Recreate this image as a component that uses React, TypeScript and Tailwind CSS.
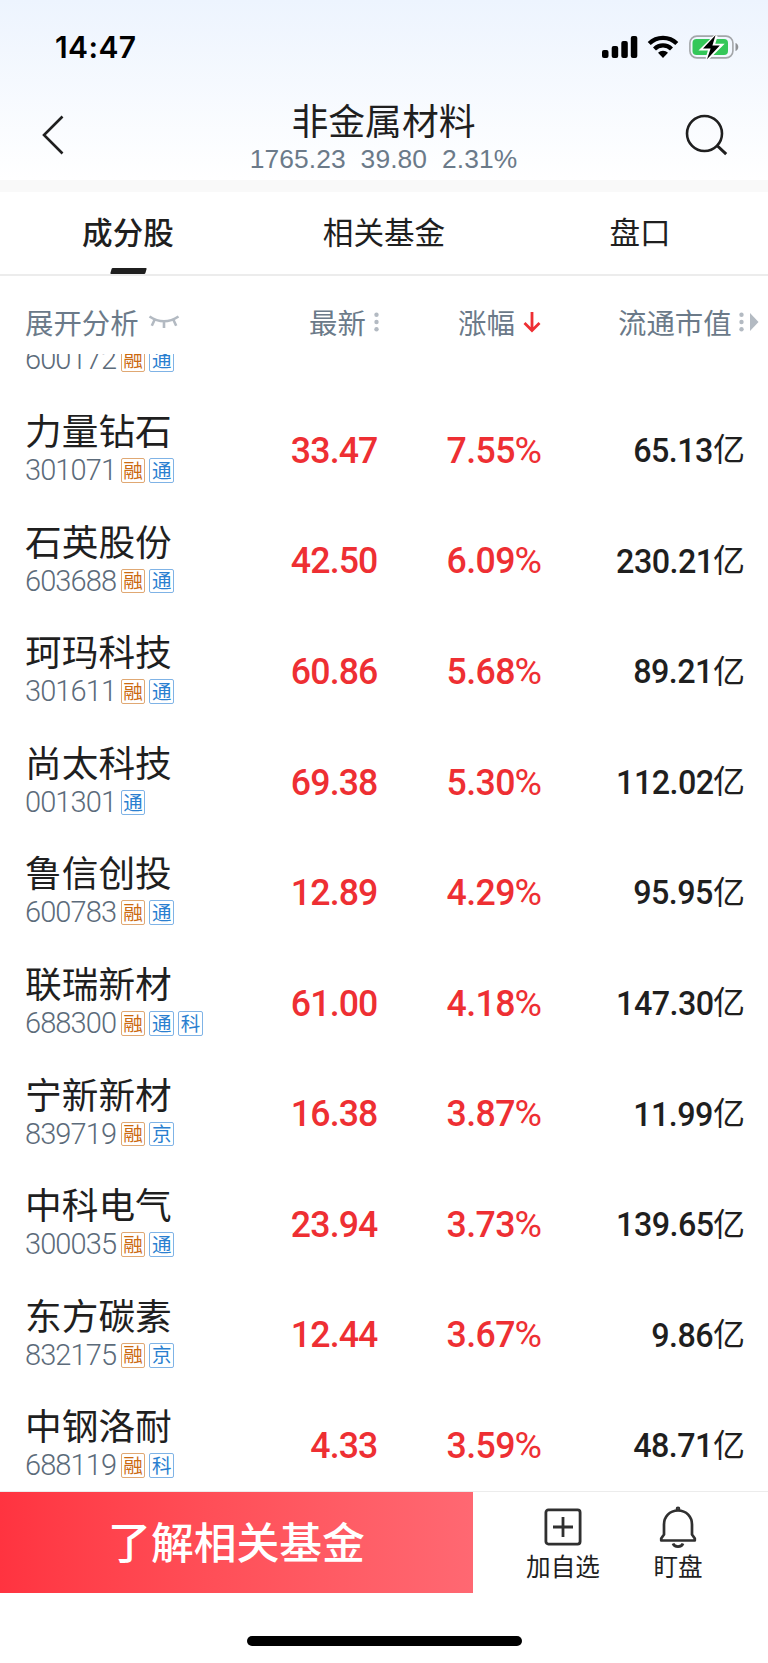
import clsx from "clsx";

type Tag = "融" | "通" | "科" | "京";

interface Stock {
  name: string;
  code: string;
  tags: Tag[];
  price: string;
  change: string;
  cap: string;
}

const STOCKS: Stock[] = [
  { name: "力量钻石", code: "301071", tags: ["融", "通"], price: "33.47", change: "7.55", cap: "65.13" },
  { name: "石英股份", code: "603688", tags: ["融", "通"], price: "42.50", change: "6.09", cap: "230.21" },
  { name: "珂玛科技", code: "301611", tags: ["融", "通"], price: "60.86", change: "5.68", cap: "89.21" },
  { name: "尚太科技", code: "001301", tags: ["通"], price: "69.38", change: "5.30", cap: "112.02" },
  { name: "鲁信创投", code: "600783", tags: ["融", "通"], price: "12.89", change: "4.29", cap: "95.95" },
  { name: "联瑞新材", code: "688300", tags: ["融", "通", "科"], price: "61.00", change: "4.18", cap: "147.30" },
  { name: "宁新新材", code: "839719", tags: ["融", "京"], price: "16.38", change: "3.87", cap: "11.99" },
  { name: "中科电气", code: "300035", tags: ["融", "通"], price: "23.94", change: "3.73", cap: "139.65" },
  { name: "东方碳素", code: "832175", tags: ["融", "京"], price: "12.44", change: "3.67", cap: "9.86" },
  { name: "中钢洛耐", code: "688119", tags: ["融", "科"], price: "4.33", change: "3.59", cap: "48.71" },
];

const TABS = ["成分股", "相关基金", "盘口"];

function StatusBar() {
  return (
    <div className="flex h-[94px] items-center justify-between pr-[28px] pl-[55px]">
      <span className="font-['Inter'] text-[30px] leading-none font-semibold tracking-[0.4px] text-black">14:47</span>
      <svg width="138" height="26" viewBox="0 0 138 26">
        <rect x="0" y="16" width="6.5" height="8" rx="2" />
        <rect x="9.7" y="12" width="6.5" height="12" rx="2" />
        <rect x="19.3" y="7" width="6.5" height="17" rx="2" />
        <rect x="28.8" y="2" width="6.5" height="22" rx="2" />
        <g fill="none" stroke="#000" strokeWidth="4.2">
          <path d="M47.2 9.6a19.4 19.4 0 0 1 27.6 0" />
          <path d="M52.5 15a12 12 0 0 1 17 0" />
        </g>
        <path d="M61 24l-5-5.2a7.2 7.2 0 0 1 10 0z" />
        <rect x="87.9" y="2.1" width="43" height="21.8" rx="7" fill="none" stroke="#a3a6a9" strokeWidth="1.6" />
        <rect x="90.5" y="5" width="35.5" height="16" rx="4" fill="#34c759" />
        <path d="M133.5 9v8c1.7-.6 2.8-2.1 2.8-4s-1.1-3.4-2.8-4z" fill="#8e9194" />
        <path d="M114 1.6L100.6 14.8h7.6l-3 10 13.4-13.4h-7.6z" stroke="#fff" strokeWidth="3.4" />
        <path d="M113.6 1L101 14.6h7.6L105 25.2l12.8-13.8h-7.4z" />
      </svg>
    </div>
  );
}

function Header() {
  return (
    <header className="h-[180px] bg-linear-to-b from-[#edf4fe] to-white">
      <StatusBar />
      <div className="flex h-[82px] items-center justify-between pr-[40px] pl-[41px]">
        <svg width="24" height="40" viewBox="0 0 24 40" fill="none" stroke="#1f1f1f" strokeWidth="2.6">
          <path d="M21.5 1.5L3 20 21.5 38.5" />
        </svg>
        <div className="flex flex-col items-center pt-[6px] pl-[18px]">
          <h1 className="text-[36.8px] leading-[43px] font-normal">非金属材料</h1>
          <p className="font-['Liberation_Sans'] text-[26.4px] leading-[37px] tracking-[0.1px] whitespace-pre text-[#6b7a89]">
            1765.23{"  "}39.80{"  "}2.31%
          </p>
        </div>
        <svg width="44" height="42" viewBox="0 0 44 42" fill="none" stroke="#1f1f1f" strokeWidth="2.6">
          <circle cx="20.5" cy="19.5" r="17.5" />
          <path d="M33 31.5l9.2 8.6" strokeWidth="3" />
        </svg>
      </div>
    </header>
  );
}

function Tabs() {
  return (
    <nav className="flex h-[84px] border-b-2 border-[#ececec] bg-white">
      {TABS.map((tab, i) => (
        <div key={tab} className="flex flex-1 flex-col items-center justify-between pt-[19px]">
          <span className={clsx("text-[30.6px] leading-[40px]", i === 0 && "font-medium")}>{tab}</span>
          {i === 0 && <span className="h-[6px] w-[35px] -skew-x-[16deg] rounded-[1px] bg-[#1f1f1f]" />}
        </div>
      ))}
    </nav>
  );
}

function SortDots() {
  return (
    <svg width="5" height="20" viewBox="0 0 5 20" fill="#b3bac2">
      <circle cx="2.5" cy="2.8" r="2.2" />
      <circle cx="2.5" cy="10" r="2.2" />
      <circle cx="2.5" cy="17.2" r="2.2" />
    </svg>
  );
}

function ColumnHeads() {
  return (
    <div className="flex h-[78px] items-center pt-[13px] pl-[25px] text-[28.4px] leading-[40px] text-[#6b7a89]">
      <div className="flex w-[284px] items-center gap-[9px]">
        <span>展开分析</span>
        <svg width="32" height="16" viewBox="0 0 32 16" fill="none" stroke="#b3bac2" strokeWidth="2.6">
          <path d="M1.5 2.5q14.5 9.5 29 0M6.5 6L3.8 11.8M16 7.5v6.5M25.5 6l2.7 5.8" />
        </svg>
      </div>
      <div className="flex w-[149px] items-center gap-[8px]">
        <span>最新</span>
        <SortDots />
      </div>
      <div className="flex w-[160px] items-center gap-[8.5px]">
        <span>涨幅</span>
        <svg width="18" height="22" viewBox="0 0 18 22" fill="none" stroke="#ee2f33" strokeWidth="2.8">
          <path d="M9 1v18.5M1.5 12L9 19.5 16.5 12" />
        </svg>
      </div>
      <div className="flex items-center gap-[7.5px]">
        <span>流通市值</span>
        <span className="flex items-center gap-[6px]">
          <SortDots />
          <svg width="9" height="18" viewBox="0 0 9 18" fill="#b3bac2">
            <path d="M0 0l8.5 9L0 18z" />
          </svg>
        </span>
      </div>
    </div>
  );
}

function CodeLine({ code, tags }: { code: string; tags: Tag[] }) {
  return (
    <div className="flex h-[26px] items-center">
      <span className="w-[95.5px] font-['Roboto'] text-[29px] leading-[26px] font-light tracking-[-0.9px] text-[#5c6b7a]">
        {code}
      </span>
      <div className="flex gap-[4px] pt-px">
        {tags.map((tag) => (
          <span
            key={tag}
            className={clsx(
              "flex size-[24.8px] items-center justify-center rounded-[2px] border-[1.5px] pb-[2px] text-[19.5px] leading-none",
              tag === "融" ? "border-[#e0a873] text-[#cc6a10]" : "border-[#7fb3e6] text-[#2a7fd0]",
            )}
          >
            {tag}
          </span>
        ))}
      </div>
    </div>
  );
}

function StockRow({ name, code, tags, price, change, cap }: Stock) {
  return (
    <div className="flex h-[110.6px] shrink-0 items-center pr-[23px] pl-[25px]">
      <div className="w-[215px] pb-[8px]">
        <div className="mb-[8px] text-[36.7px] leading-[40px]">{name}</div>
        <CodeLine code={code} tags={tags} />
      </div>
      <div className="w-[137.5px] origin-right scale-x-95 pt-px text-right font-['Roboto'] text-[37.5px] leading-none font-medium tracking-[-0.9px] text-[#ee2f33]">
        {price}
      </div>
      <div className="flex w-[164.5px] items-center justify-end pt-px font-['Roboto'] text-[37.5px] leading-none text-[#ee2f33]">
        <span className="origin-right scale-x-95 font-medium tracking-[-0.6px]">{change}</span>
        <span>%</span>
      </div>
      <div className="flex flex-1 items-center justify-end">
        <span className="origin-right scale-x-95 font-['Roboto'] text-[34px] leading-none font-medium tracking-[-0.6px]">
          {cap}
        </span>
        <span className="pb-[5px] text-[32px] leading-none">亿</span>
      </div>
    </div>
  );
}

function BottomBar() {
  return (
    <footer className="flex h-[102px] border-t border-[#ececec]">
      <button className="w-[473px] bg-linear-to-r from-[#ff3340] to-[#ff6872] pb-[4px] text-[42.8px] leading-none font-medium text-white">
        了解相关基金
      </button>
      <div className="flex flex-1 pl-[53px] text-[24.6px] leading-[32px]">
        <div className="flex w-[74px] flex-col items-center pt-[16px]">
          <svg width="38" height="38" viewBox="0 0 38 38" fill="none" stroke="#303030" strokeWidth="2.8">
            <rect x="1.9" y="1.9" width="34.2" height="34.2" rx="2.5" />
            <path d="M9 19h20M19 9v20" />
          </svg>
          <span className="mt-[3px]">加自选</span>
        </div>
        <div className="ml-[53px] flex w-[50px] flex-col items-center pt-[14px]">
          <svg width="38" height="43" viewBox="0 0 38 43" fill="none" stroke="#303030" strokeWidth="2.7" strokeLinejoin="round">
            <path d="M19 4.5C10.5 4.5 5 10.8 5 18.5V28.5L2.2 32.5V34.5H35.800V32.5L33 28.5V18.5C33 10.8 27.5 4.5 19 4.5Z" />
            <path d="M14 37.500a5.200 4.200 0 0 0 10 0" />
            <circle cx="19" cy="2.9" r="1" />
          </svg>
          <span>盯盘</span>
        </div>
      </div>
    </footer>
  );
}

export default function App() {
  return (
    <div className="flex h-[1663px] w-[768px] flex-col overflow-hidden bg-white font-['Noto_Sans_CJK_SC',sans-serif] text-[#1f1f1f]">
      <Header />
      <div className="h-[12px] bg-[#f9f9f9]" />
      <Tabs />
      <ColumnHeads />
      <main className="flex h-[1137px] flex-col overflow-hidden">
        {/* row scrolled under the column heads, only its code line shows */}
        <div className="-mt-[8px] mb-[22.7px] pl-[25px]">
          <CodeLine code="600172" tags={["融", "通"]} />
        </div>
        {STOCKS.map((stock) => (
          <StockRow key={stock.code} {...stock} />
        ))}
      </main>
      <BottomBar />
      <div className="flex flex-1 items-end justify-center pb-[17px]">
        <div className="h-[10px] w-[275px] rounded-full bg-black" />
      </div>
    </div>
  );
}
